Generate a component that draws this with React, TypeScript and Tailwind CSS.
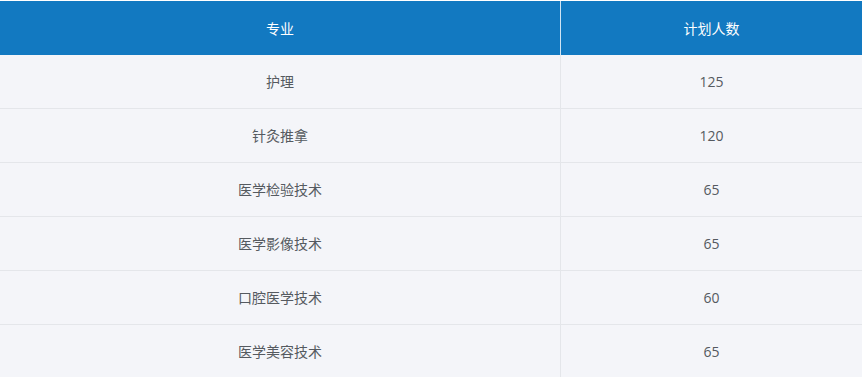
import React from "react";

const rows: [string, string][] = [
  ["护理", "125"],
  ["针灸推拿", "120"],
  ["医学检验技术", "65"],
  ["医学影像技术", "65"],
  ["口腔医学技术", "60"],
  ["医学美容技术", "65"],
];

export default function App() {
  return (
    <div
      className="w-[862px] h-[377px] overflow-hidden bg-white pt-px text-[14px]"
      style={{ fontFamily: '"Segoe UI", "Open Sans", "Noto Sans CJK SC", sans-serif' }}
    >
      <div className="flex h-[54px] bg-[#1279c1] text-white">
        <div className="w-[561px] border-r border-white/80 flex items-center justify-center">专业</div>
        <div className="flex-1 flex items-center justify-center">计划人数</div>
      </div>
      <div className="bg-[#f4f5f9]">
        {rows.map(([a, b], i) => (
          <div key={i} className="flex h-[54px] border-b border-[#e4e6ea] text-[#555a60]">
            <div className="w-[561px] border-r border-[#e4e6ea] flex items-center justify-center">{a}</div>
            <div className="flex-1 flex items-center justify-center">{b}</div>
          </div>
        ))}
      </div>
    </div>
  );
}
